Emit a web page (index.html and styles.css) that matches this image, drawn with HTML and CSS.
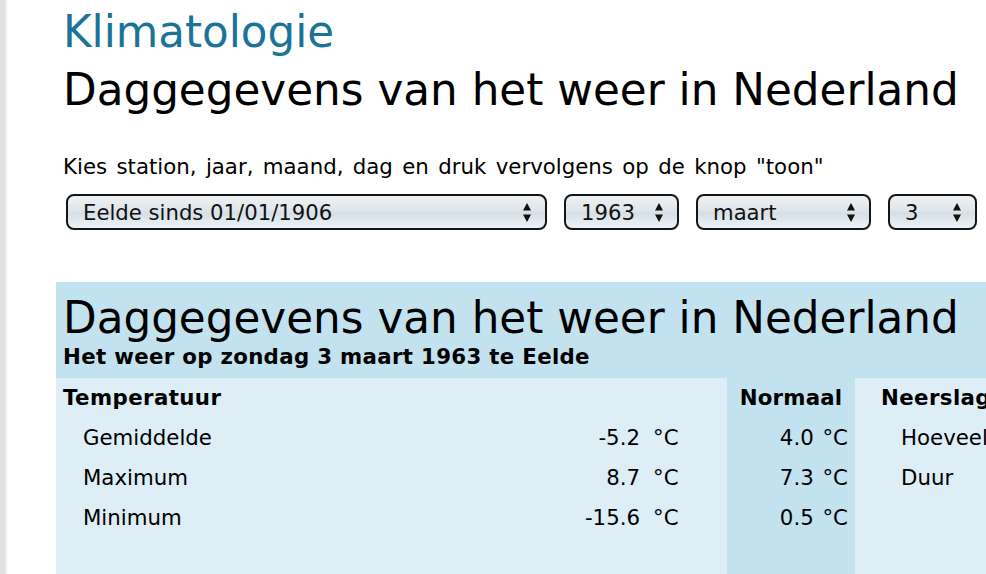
FILE: index.html
```html
<!DOCTYPE html>
<html lang="nl">
<head>
<meta charset="utf-8">
<title>Klimatologie - Daggegevens van het weer in Nederland</title>
<link rel="stylesheet" href="styles.css">
</head>
<body>
<div class="page">
  <header class="intro">
    <div class="site">Klimatologie</div>
    <h1 class="title">Daggegevens van het weer in Nederland</h1>
  </header>
  <p class="instr">Kies station, jaar, maand, dag en druk vervolgens op de knop "toon"</p>
  <form class="pickers">
    <div class="select s-station"><span class="val">Eelde sinds 01/01/1906</span><svg class="arr" width="8" height="19" viewBox="0 0 8 19"><path d="M0 7.5 L4 0 L8 7.5 Z M0 11.5 L8 11.5 L4 19 Z" fill="#111"/></svg></div>
    <div class="select s-year"><span class="val">1963</span><svg class="arr" width="8" height="19" viewBox="0 0 8 19"><path d="M0 7.5 L4 0 L8 7.5 Z M0 11.5 L8 11.5 L4 19 Z" fill="#111"/></svg></div>
    <div class="select s-month"><span class="val">maart</span><svg class="arr" width="8" height="19" viewBox="0 0 8 19"><path d="M0 7.5 L4 0 L8 7.5 Z M0 11.5 L8 11.5 L4 19 Z" fill="#111"/></svg></div>
    <div class="select s-day"><span class="val">3</span><svg class="arr" width="8" height="19" viewBox="0 0 8 19"><path d="M0 7.5 L4 0 L8 7.5 Z M0 11.5 L8 11.5 L4 19 Z" fill="#111"/></svg></div>
  </form>

  <section class="result">
    <div class="result-head">
      <h2 class="title">Daggegevens van het weer in Nederland</h2>
      <div class="sub">Het weer op zondag 3 maart 1963 te Eelde</div>
    </div>
    <div class="grid">
      <div class="c lab head">Temperatuur</div>
      <div class="c num"></div>
      <div class="c unit"></div>
      <div class="c norm head-c">Normaal</div>
      <div class="c ext head">Neerslag</div>

      <div class="c lab ind">Gemiddelde</div>
      <div class="c num">-5.2</div>
      <div class="c unit">°C</div>
      <div class="c norm">4.0 °C</div>
      <div class="c ext ind">Hoeveelheid</div>

      <div class="c lab ind">Maximum</div>
      <div class="c num">8.7</div>
      <div class="c unit">°C</div>
      <div class="c norm">7.3 °C</div>
      <div class="c ext ind">Duur</div>

      <div class="c lab ind">Minimum</div>
      <div class="c num">-15.6</div>
      <div class="c unit">°C</div>
      <div class="c norm">0.5 °C</div>
      <div class="c ext"></div>

      <div class="c lab fill"></div>
      <div class="c num fill"></div>
      <div class="c unit fill"></div>
      <div class="c norm fill"></div>
      <div class="c ext fill"></div>
    </div>
  </section>
</div>
</body>
</html>
```

FILE: styles.css
```css
html {
  overflow: hidden;
}
body {
  margin: 0;
  background: linear-gradient(to right, #e1e1e1 0, #e1e1e1 5px, #ededed 5px, #ededed 7px, #ffffff 7px);
  color: #000;
  font-family: "DejaVu Sans", Verdana, sans-serif;
  font-size: 21.3px;
}
.page {
  padding-top: 4px;
}
.intro {
  padding-left: 63px;
}
.site {
  font-size: 43.6px;
  line-height: 57px;
  color: #1b7397;
}
.title {
  margin: 0;
  font-size: 43.7px;
  line-height: 57px;
  font-weight: normal;
  white-space: nowrap;
}
.instr {
  margin: 36px 0 0 63px;
  line-height: 26px;
  white-space: nowrap;
  word-spacing: 2.6px;
}
.pickers {
  display: flex;
  gap: 17px;
  margin: 14px 0 0 66px;
}
.select {
  box-sizing: border-box;
  height: 36px;
  display: flex;
  align-items: center;
  justify-content: space-between;
  padding: 0 14px 0 15px;
  border: 2px solid #151515;
  border-radius: 8px;
  background: linear-gradient(to bottom, #eef1f4 0%, #dfe5ea 45%, #d6dfe5 55%, #e3edf3 85%, #eaf2f6 100%);
  font-family: "DejaVu Sans", "Lucida Grande", sans-serif;
  font-size: 21.2px;
  color: #111;
}
.s-station { width: 481px; }
.s-year { width: 115px; }
.s-month { width: 175px; }
.s-day { width: 89px; }
.arr {
  display: block;
  flex: none;
}
.result {
  margin: 52px 0 0 56px;
  background: #c3e2ef;
}
.result-head {
  padding: 10px 0 8px 7px;
}
.result-head .title {
  line-height: 52px;
}
.sub {
  font-weight: bold;
  line-height: 26px;
  white-space: nowrap;
  letter-spacing: 0.32px;
}
.grid {
  display: grid;
  grid-template-columns: 504px 80px 87px 128px 220px;
  grid-auto-rows: 40px;
}
.c {
  line-height: 40px;
  white-space: nowrap;
  background: #ddeef6;
}
.lab {
  padding-left: 7px;
}
.lab.ind {
  padding-left: 27px;
}
.head {
  font-weight: bold;
  letter-spacing: 0.4px;
}
.num {
  text-align: right;
}
.unit {
  padding-left: 13px;
}
.norm {
  background: #c3e2ef;
  text-align: right;
  padding-right: 7px;
  word-spacing: 2px;
}
.norm.head-c {
  text-align: center;
  padding-right: 0;
  font-weight: bold;
  letter-spacing: 0.2px;
}
.ext {
  padding-left: 26px;
}
.ext.ind {
  padding-left: 46px;
}
.fill {
  height: 60px;
}
```
